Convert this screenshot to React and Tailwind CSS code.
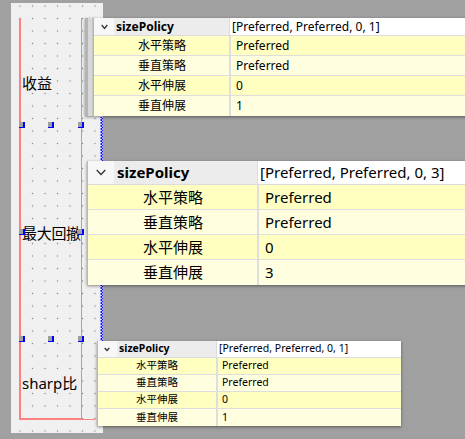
import React from "react";

const font = { fontFamily: '"Noto Sans", "Noto Sans CJK SC", sans-serif' };

const rows = [
  ["水平策略", "Preferred"],
  ["垂直策略", "Preferred"],
  ["水平伸展", "0"],
  ["垂直伸展", null],
];

const tables = [
  {
    wrap: "left-[85px] top-[18px] w-[390px]",
    strip: true,
    text: "text-[12px]",
    head: "h-[18px]",
    row: "h-[20px]",
    leftCol: "w-[135px]",
    chevCell: "w-[20px] pl-[7px]",
    chev: [7, 4],
    title: "pl-[2px]",
    headVal: "pl-[2px]",
    label: "pl-[44px]",
    val: "pl-[5px]",
    stretch: "1",
  },
  {
    wrap: "left-[87px] top-[161px] w-[390px]",
    text: "text-[15px]",
    head: "h-[24px]",
    row: "h-[25px]",
    leftCol: "w-[169px]",
    chevCell: "w-[26px] pl-[8px]",
    chev: [10, 5],
    title: "pl-[3px]",
    headVal: "pl-[2px]",
    label: "pl-[55px]",
    val: "pl-[6px]",
    stretch: "3",
  },
  {
    wrap: "left-[97px] top-[341px] w-[304px]",
    text: "text-[10.5px]",
    head: "h-[17px]",
    row: "h-[17px]",
    leftCol: "w-[118px]",
    chevCell: "w-[19px] pl-[6px]",
    chev: [6, 3],
    title: "pl-[2px]",
    headVal: "pl-[2px]",
    label: "pl-[38px]",
    val: "pl-[4px]",
    stretch: "1",
  },
];

function Chevron({ w, h }) {
  return (
    <svg width={w} height={h + 2} viewBox={`0 0 ${w} ${h + 2}`}>
      <polyline
        points={`0.7,1 ${w / 2},${h + 0.5} ${w - 0.7},1`}
        fill="none"
        stroke="#333"
        strokeWidth="1.3"
      />
    </svg>
  );
}

function PropTable({ t }) {
  return (
    <div
      className={`absolute ${t.wrap} flex shadow-[0_1px_3px_rgba(0,0,0,0.45)] text-black ${t.text}`}
      style={font}
    >
      {t.strip && (
        <div className="flex shrink-0">
          <div className="w-[3px] bg-[#b4b4b4]" />
          <div className="w-[4px] bg-[#d8d8d8]" />
          <div className="w-[1px] bg-[#c4c4c4]" />
        </div>
      )}
      <div className="flex-1 flex flex-col border-l border-[#b8b8b8]">
        {/* header */}
        <div className={`flex ${t.head} border-b border-[#dcdcdc]`}>
          <div className={`flex ${t.leftCol} shrink-0`}>
            <div className={`flex items-center ${t.chevCell} bg-[#f7f7f7] shrink-0`}>
              <Chevron w={t.chev[0]} h={t.chev[1]} />
            </div>
            <div className={`flex-1 flex items-center ${t.title} bg-[#ececec] font-bold`}>
              sizePolicy
            </div>
          </div>
          <div
            className={`flex-1 flex items-center ${t.headVal} bg-white border-l border-[#dcdcdc] whitespace-nowrap`}
          >
            [Preferred, Preferred, 0, {t.stretch}]
          </div>
        </div>
        {rows.map(([label, value], i) => (
          <div
            key={label}
            className={`flex ${t.row} ${i % 2 === 0 ? "bg-[#ffffc2]" : "bg-[#ffffe0]"} ${
              i < 3 ? "border-b border-[#dedede]" : ""
            }`}
          >
            <div className={`${t.leftCol} shrink-0 flex items-center ${t.label}`}>{label}</div>
            <div className={`flex-1 flex items-center ${t.val} border-l-2 border-[#dedede]`}>
              {value ?? t.stretch}
            </div>
          </div>
        ))}
      </div>
    </div>
  );
}

function Handle({ className }) {
  return (
    <div className={`absolute w-[6px] h-[6px] bg-[#0000ff] ${className}`}>
      <div className="w-[4px] h-[5px] bg-[#a0a0a0]" />
    </div>
  );
}

function Zigzag() {
  let d = "M0,0";
  for (let y = 0; y < 226; y += 3) {
    d += ` L3,${y + 1.5} L0.5,${y + 3}`;
  }
  return (
    <svg className="absolute left-[89px] top-[114px]" width="3" height="227">
      <path d={d} fill="none" stroke="#0000ff" strokeWidth="1" />
    </svg>
  );
}

export default function App() {
  return (
    <div className="relative w-[465px] h-[439px] overflow-hidden bg-[#a0a0a0]">
      {/* designer form canvas */}
      <div
        className="relative ml-[11px] mt-[3px] w-[92px] h-[430px] bg-[#f0f0f0] bg-[radial-gradient(circle,#8c8c8c_0.8px,transparent_1px)] bg-[length:12.5px_12.5px] bg-[position:2.75px_-3.25px]"
        style={font}
      >
        {/* layout frame */}
        <div className="absolute left-[8px] top-[15px] w-[2px] h-[402px] bg-[#ff8080]" />
        <div className="absolute left-[70px] top-[15px] w-[1px] h-[401px] bg-[#ff8080]" />
        <div className="absolute left-[8px] top-[415px] w-[63px] h-[2px] bg-[#ff8080]" />
        <div className="absolute left-[71px] top-[416px] w-[13px] h-[1px] bg-[#ff8080]" />

        <Zigzag />

        <div className="absolute left-[11px] top-[69px] text-[15px] leading-[22px]">收益</div>
        <div className="absolute left-[11px] top-[219px] text-[15px] leading-[22px] tracking-[-0.3px]">
          最大回撤
        </div>
        <div className="absolute left-[11px] top-[369px] text-[15px] leading-[22px]">sharp比</div>

        {/* selection handles */}
        <Handle className="left-[8px] top-[119px]" />
        <Handle className="left-[37px] top-[119px]" />
        <Handle className="left-[67px] top-[119px]" />
        <Handle className="left-[8px] top-[226px]" />
        <Handle className="left-[67px] top-[226px]" />
        <Handle className="left-[8px] top-[333px]" />
        <Handle className="left-[37px] top-[333px]" />
        <Handle className="left-[67px] top-[333px]" />
      </div>

      {tables.map((t, i) => (
        <PropTable key={i} t={t} />
      ))}
    </div>
  );
}
